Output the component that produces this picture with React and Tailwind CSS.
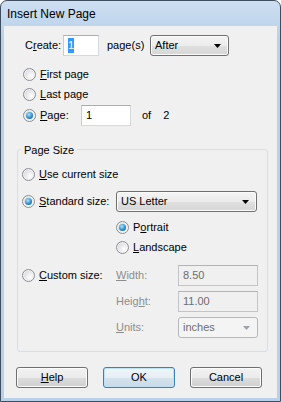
import React from "react";

const F = { fontFamily: '"Liberation Sans", Arial, sans-serif' };

function Radio({ checked }) {
  return (
    <span className="w-[13px] h-[13px] shrink-0 rounded-full border border-[#8c8f94] bg-[radial-gradient(circle_at_65%_65%,#ffffff,#dcdcdc_70%,#c9c9c9)] flex items-center justify-center shadow-[inset_0_0_0_1px_#f4f4f4]">
      {checked && (
        <span className="w-[7px] h-[7px] rounded-full bg-[radial-gradient(circle_at_40%_35%,#aee4fb,#2f8fcf_55%,#0f4778)]" />
      )}
    </span>
  );
}

function Arrow({ disabled }) {
  return (
    <svg width="7" height="4" viewBox="0 0 7 4" className="shrink-0">
      <path d="M0 0h7L3.5 4z" fill={disabled ? "#9ea3a8" : "#000"} />
    </svg>
  );
}

function Combo({ w, text, disabled }) {
  return (
    <div
      className={
        "h-[21px] rounded-[3px] border flex items-center justify-between pl-[4px] pr-[7px] " +
        (disabled
          ? "border-[#b5b8bc] bg-[#f4f4f4] text-[#6d6d6d]"
          : "border-[#707070] bg-[linear-gradient(#f4f4f4_0%,#ececec_50%,#e0e0e0_51%,#d6d6d6_100%)] shadow-[inset_0_0_0_1px_#fbfbfb] text-black")
      }
      style={{ width: w }}
    >
      <span>{text}</span>
      <Arrow disabled={disabled} />
    </div>
  );
}

function TextBox({ w, children, disabled }) {
  return (
    <div
      className={
        "h-[21px] border flex items-center pl-[4px] " +
        (disabled
          ? "border-[#c2c4c7] border-t-[#b0b3b7] bg-[#f0f0f0] text-[#6d6d6d]"
          : "border-[#d6d9de] border-t-[#abadb3] border-l-[#c8ccd1] bg-white text-black")
      }
      style={{ width: w }}
    >
      {children}
    </div>
  );
}

function Btn({ children, def }) {
  return (
    <div
      className={
        "w-[72px] h-[21px] rounded-[3px] border flex items-center justify-center text-black " +
        (def
          ? "border-[#3c7fb1] bg-[linear-gradient(#f0f6fa_0%,#e6eff5_50%,#d4e3ee_51%,#c9dae6_100%)] shadow-[inset_0_0_0_1px_#bfe2f6]"
          : "border-[#707070] bg-[linear-gradient(#f2f2f2_0%,#ebebeb_50%,#dddddd_51%,#cfcfcf_100%)] shadow-[inset_0_0_0_1px_#fcfcfc]")
      }
    >
      {children}
    </div>
  );
}

export default function App() {
  return (
    <div
      style={F}
      className="w-[281px] h-[402px] flex flex-col rounded-t-[7px] border border-[#3e4e5e] bg-[linear-gradient(#cddff1,#b8d0e9_40px,#b8d0e9)] text-[11px] text-black overflow-hidden"
    >
      <div className="h-[25px] shrink-0 flex items-center pl-[6px] text-[12px]">Insert New Page</div>
      <div className="flex-1 mx-[3px] mb-[3px] bg-[#f0f0f0] flex flex-col">
        {/* Create row */}
        <div className="mt-[9px] h-[21px] flex items-center pl-[21px]">
          <span className="w-[38px]">
            C<span className="underline">r</span>eate:
          </span>
          <TextBox w={36}>
            <span className="bg-[#3399ff] text-white h-[15px] flex items-center px-[0px] leading-none">1</span>
          </TextBox>
          <span className="ml-[8px] w-[43px]">page(s)</span>
          <Combo w={79} text="After" />
        </div>

        {/* First page */}
        <div className="mt-[8px] h-[20px] flex items-center pl-[19px] gap-[4px]">
          <Radio />
          <span>
            <span className="underline">F</span>irst page
          </span>
        </div>
        <div className="h-[20px] flex items-center pl-[19px] gap-[4px]">
          <Radio />
          <span>
            <span className="underline">L</span>ast page
          </span>
        </div>
        <div className="mt-[1px] h-[20px] flex items-center pl-[19px]">
          <Radio checked />
          <span className="ml-[4px] w-[41px]">
            <span className="underline">P</span>age:
          </span>
          <TextBox w={50}>1</TextBox>
          <span className="ml-[11px]">of</span>
          <span className="ml-[12px]">2</span>
        </div>

        {/* Group box */}
        <div className="relative mt-[24px] ml-[13px] w-[251px] h-[203px] rounded-[3px] border border-[#d5dfe5] flex flex-col">
          <span className="absolute -top-[8px] left-[3px] px-[3px] bg-[#f0f0f0]">Page Size</span>

          <div className="mt-[14px] h-[21px] flex items-center pl-[4px] gap-[4px]">
            <Radio />
            <span>
              <span className="underline">U</span>se current size
            </span>
          </div>

          <div className="mt-[6px] h-[21px] flex items-center pl-[4px]">
            <Radio checked />
            <span className="ml-[4px] w-[77px]">
              <span className="underline">S</span>tandard size:
            </span>
            <Combo w={141} text="US Letter" />
          </div>

          <div className="mt-[5px] h-[20px] flex items-center pl-[98px] gap-[4px]">
            <Radio checked />
            <span>
              P<span className="underline">o</span>rtrait
            </span>
          </div>
          <div className="h-[20px] flex items-center pl-[98px] gap-[4px]">
            <Radio />
            <span>
              <span className="underline">L</span>andscape
            </span>
          </div>

          <div className="mt-[8px] h-[21px] flex items-center pl-[4px]">
            <Radio />
            <span className="ml-[4px] w-[77px]">
              <span className="underline">C</span>ustom size:
            </span>
            <span className="w-[62px] text-[#8d8d8d]">
              <span className="underline">W</span>idth:
            </span>
            <TextBox w={80} disabled>8.50</TextBox>
          </div>
          <div className="mt-[5px] h-[21px] flex items-center pl-[98px]">
            <span className="w-[62px] text-[#8d8d8d]">
              Heig<span className="underline">h</span>t:
            </span>
            <TextBox w={80} disabled>11.00</TextBox>
          </div>
          <div className="mt-[5px] h-[21px] flex items-center pl-[98px]">
            <span className="w-[62px] text-[#8d8d8d]">
              <span className="underline">U</span>nits:
            </span>
            <Combo w={80} text="inches" disabled />
          </div>
        </div>

        {/* Buttons */}
        <div className="mt-[15px] flex pl-[12px] gap-[15px]">
          <Btn>
            <span>
              <span className="underline">H</span>elp
            </span>
          </Btn>
          <Btn def>OK</Btn>
          <Btn>Cancel</Btn>
        </div>
      </div>
    </div>
  );
}
